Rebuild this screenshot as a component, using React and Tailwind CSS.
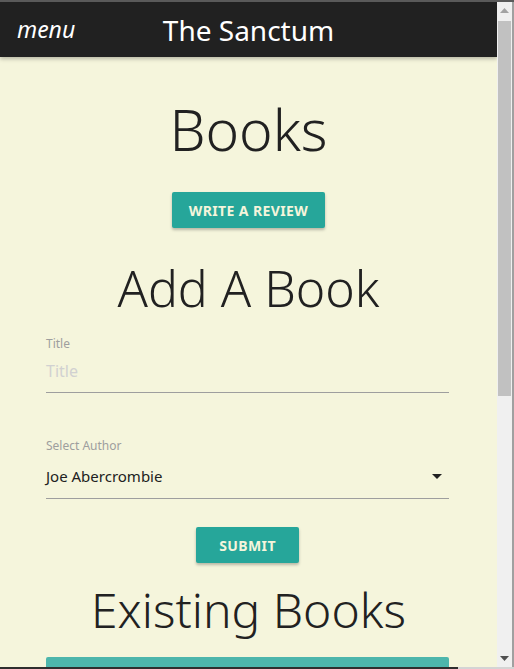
import React from 'react';

const font = { fontFamily: '"Noto Sans", "Open Sans", sans-serif' };

const Field = ({ label, children, className = '' }) => (
  <div className={className}>
    <label className="block text-[12px] leading-none text-[#9e9e9e]">{label}</label>
    {children}
  </div>
);

const Scrollbar = () => (
  <div className="flex w-[17px] flex-col bg-[#f0f0f0] border-r-2 border-[#a0a0a0]">
    <div className="flex h-[17px] items-center justify-center">
      <svg width="9" height="5" viewBox="0 0 9 5">
        <path d="M0 5 L4.5 0 L9 5 Z" fill="#a3a3a3" />
      </svg>
    </div>
    <div className="flex-1 pl-[1px] pt-[2px]">
      <div className="h-[375px] w-[13px] bg-[#c1c1c1]" />
    </div>
    <div className="flex h-[17px] items-center justify-center">
      <svg width="9" height="5" viewBox="0 0 9 5">
        <path d="M0 0 L9 0 L4.5 5 Z" fill="#505050" />
      </svg>
    </div>
  </div>
);

export default function App() {
  return (
    <div className="h-[669px] w-[514px] overflow-hidden bg-[#f5f5dc]" style={font}>
      <div className="h-[2px] bg-[#5a5a5a]" />
      <div className="flex h-[665px]">
        <div className="w-[497px] overflow-hidden">
          {/* Nav */}
          <nav className="relative z-10 grid h-[55px] grid-cols-[1fr_auto_1fr] items-center bg-[#212121] shadow-[0_2px_4px_rgba(0,0,0,0.25)]">
            <span className="pl-[17px] text-[23px] italic leading-none text-white">menu</span>
            <span className="text-[28px] leading-none text-white">The Sanctum</span>
            <span />
          </nav>

          <div className="flex flex-col items-center text-[#212121]">
            <h1 className="mt-[44px] text-[57px] font-[350] leading-none">Books</h1>
            <button className="mt-[34px] h-[36px] w-[153px] rounded-[2px] bg-[#26a69a] text-[14px] font-bold uppercase tracking-[0.4px] text-[#f5f5dc] shadow-[0_2px_3px_rgba(0,0,0,0.25)]">
              Write a review
            </button>
            <h2 className="mt-[35px] text-[50px] font-[350] leading-none">Add A Book</h2>
          </div>

          <form className="px-[46px] pr-[48px]">
            <Field label="Title" className="mt-[25px]">
              <div className="mt-[13px] border-b border-[#9e9e9e] pb-[13px] text-[16px] leading-none text-[#d1d1d1]">
                Title
              </div>
            </Field>
            <Field label="Select Author" className="mt-[47px]">
              <div className="mt-[17px] flex items-center justify-between border-b border-[#9e9e9e] pb-[14px] text-[15px] leading-none text-[#212121]">
                <span>Joe Abercrombie</span>
                <svg width="10" height="5" viewBox="0 0 10 5" className="mr-[7px]">
                  <path d="M0 0 L10 0 L5 5 Z" fill="#212121" />
                </svg>
              </div>
            </Field>
            <div className="mt-[28px] flex justify-center">
              <button className="h-[36px] w-[103px] rounded-[2px] bg-[#26a69a] text-[14px] font-bold uppercase tracking-[0.4px] text-[#f5f5dc] shadow-[0_2px_3px_rgba(0,0,0,0.25)]">
                Submit
              </button>
            </div>
          </form>

          <div className="flex flex-col items-center text-[#212121]">
            <h2 className="mt-[23px] text-[48px] font-[350] leading-none">Existing Books</h2>
          </div>
          <div className="mx-[46px] mr-[48px] mt-[23px] h-[40px] rounded-t-[2px] bg-[#4db6ac]" />
        </div>
        <Scrollbar />
      </div>
      <div className="flex h-[2px]">
        <div className="w-[458px] bg-[#2e2e2e]" />
        <div className="flex-1 bg-[#d4d4d4]" />
      </div>
    </div>
  );
}
